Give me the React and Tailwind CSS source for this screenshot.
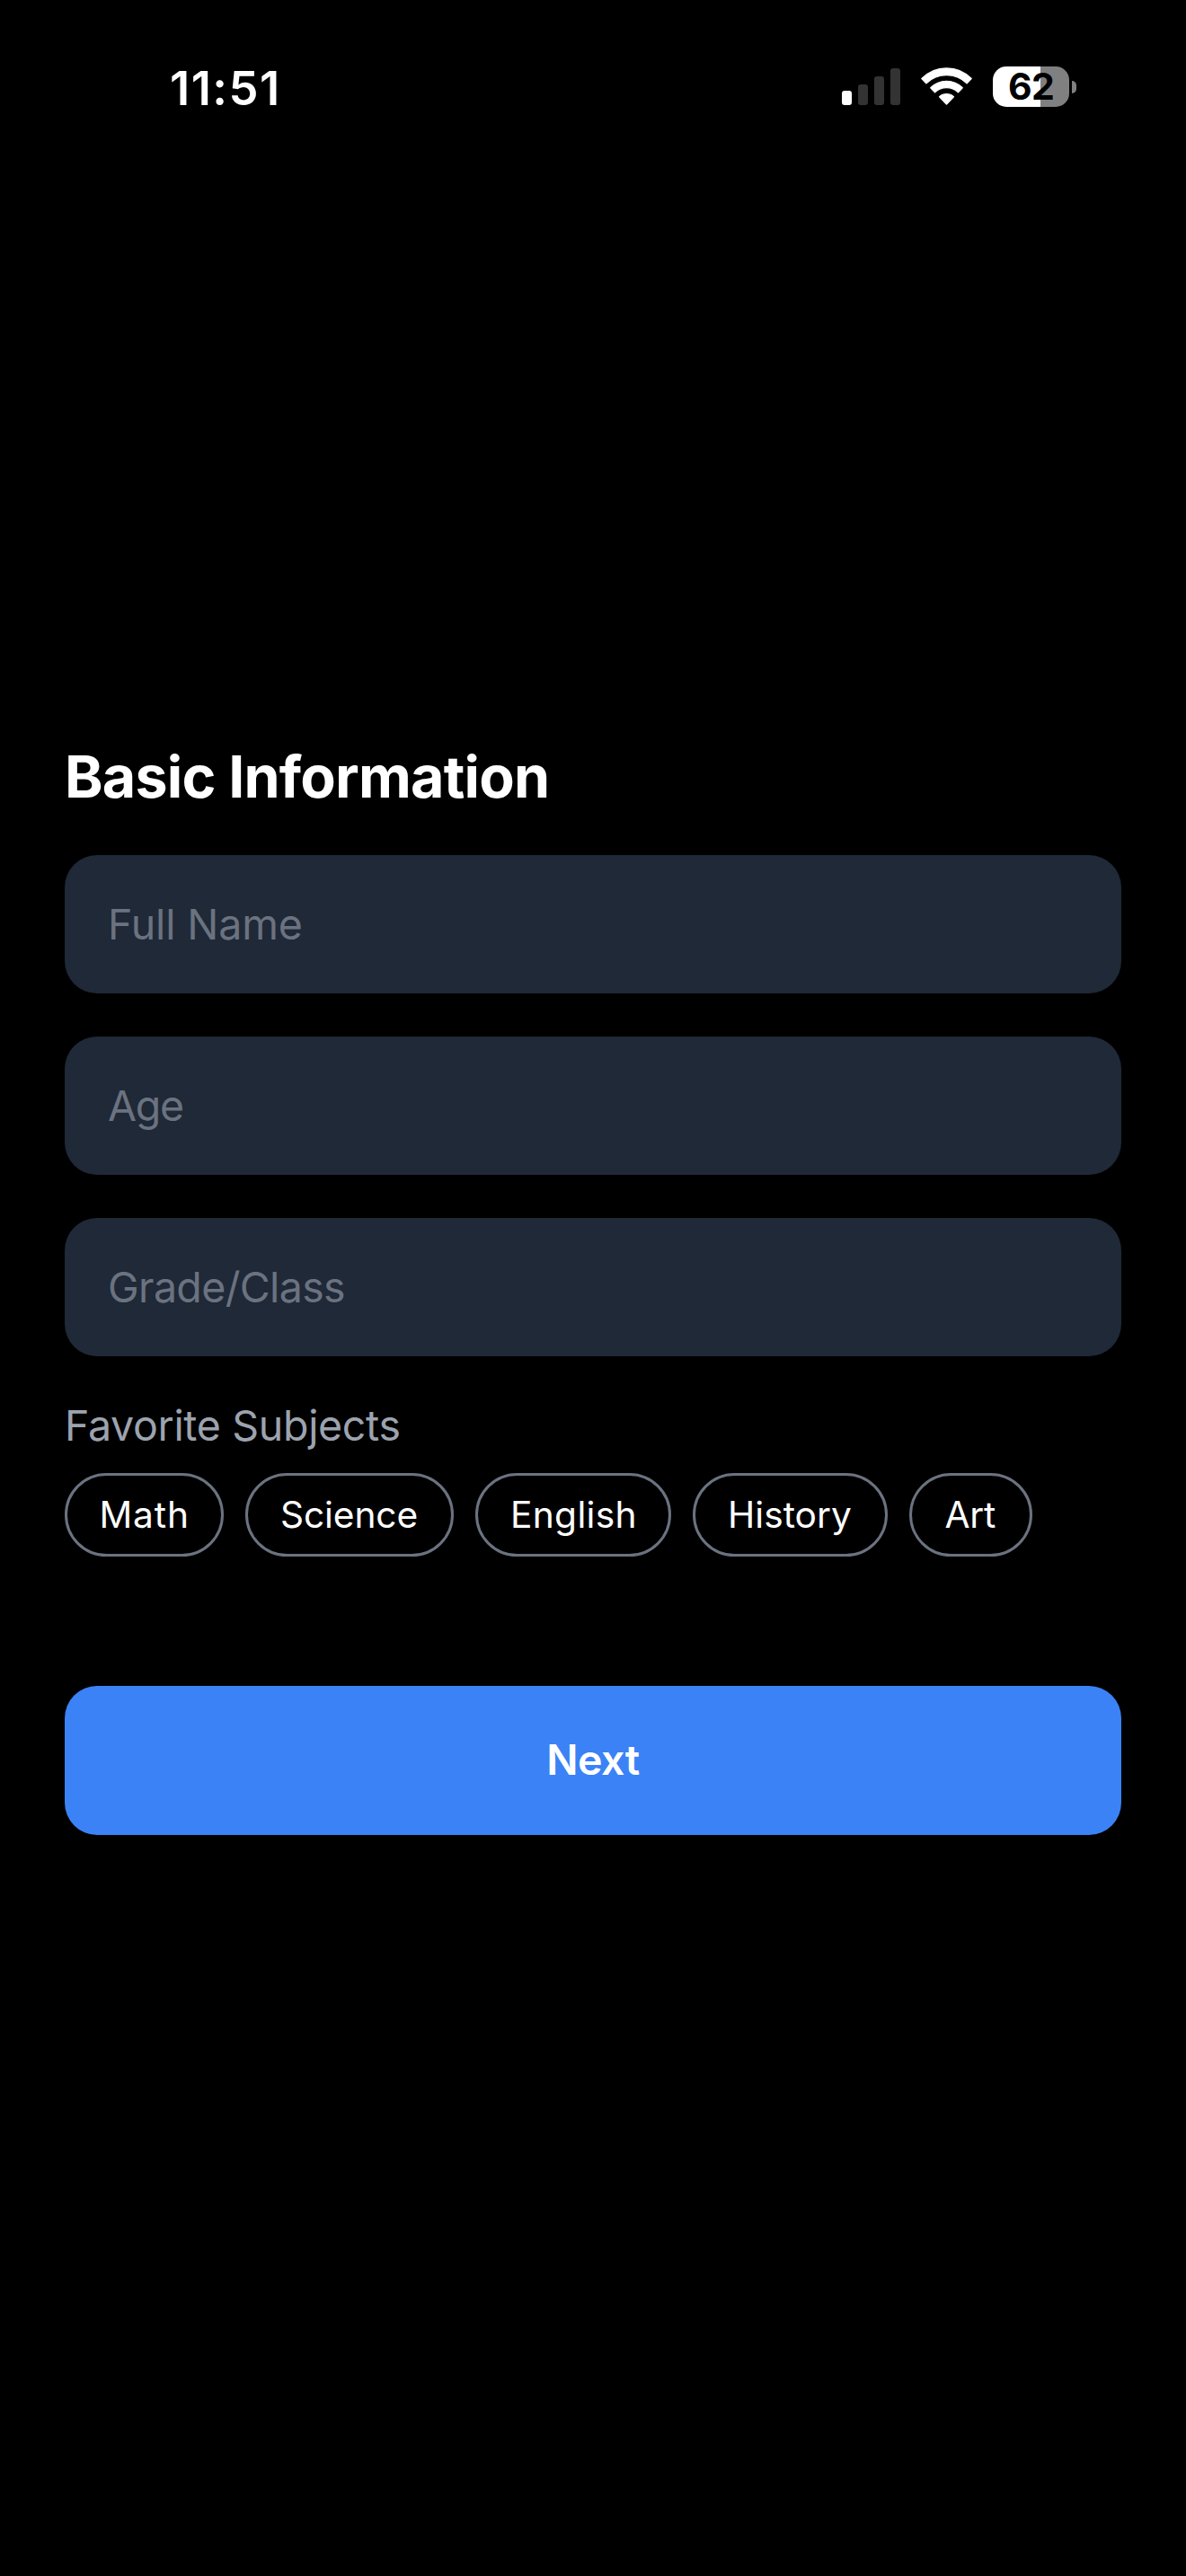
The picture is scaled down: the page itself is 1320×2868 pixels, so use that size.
const fields = ["Full Name", "Age", "Grade/Class"];
const fieldTracking = ["tracking-[-0.13px]", "tracking-[-1.3px]", "tracking-[-0.65px]"];

const subjects = [
  { label: "Math", style: "w-[177px] pl-[35.5px] tracking-[0.86px]" },
  { label: "Science", style: "w-[232px] pl-[36px] tracking-[-0.12px]" },
  { label: "English", style: "w-[218px] pl-[36px] tracking-[0.31px]" },
  { label: "History", style: "w-[217px] pl-[36px] tracking-[0.03px]" },
  { label: "Art", style: "w-[137px] pl-[36.5px] tracking-[-0.26px]" },
];

function SignalBars() {
  return (
    <div className="flex h-[43px] items-end gap-[7px] pb-[1px]">
      <span className="h-[16px] w-[11px] rounded-[3px] bg-white" />
      <span className="h-[23px] w-[11px] rounded-[3px] bg-[#333333]" />
      <span className="h-[32px] w-[11px] rounded-[3px] bg-[#333333]" />
      <span className="h-[41px] w-[11px] rounded-[3px] bg-[#333333]" />
    </div>
  );
}

function WifiIcon() {
  return (
    <svg
      width="57"
      height="43"
      viewBox="0 0 57 43"
      fill="white"
      stroke="white"
      strokeWidth="1.4"
      strokeLinejoin="round"
    >
      <path d="M0.9 12.6 A38.5 38.5 0 0 1 56.1 12.6 L51.1 17.8 A32.5 32.5 0 0 0 5.9 17.8 Z" />
      <path d="M10.8 22.7 A25 25 0 0 1 46.2 22.7 L41.4 27.7 A18.8 18.8 0 0 0 15.6 27.7 Z" />
      <path d="M20.6 32.8 A11.5 11.5 0 0 1 36.4 32.8 L28.5 41.1 Z" />
    </svg>
  );
}

function Battery() {
  return (
    <div className="flex items-center gap-[3px]">
      <div className="flex h-[45px] w-[85px] items-center justify-center rounded-[15px] bg-[linear-gradient(90deg,#ffffff_53px,#808080_53px)]">
        <span className="text-[41px] leading-[45px] font-bold tracking-[-0.63px] text-black">62</span>
      </div>
      <span className="h-[14px] w-[5px] rounded-r-full bg-[#808080]" />
    </div>
  );
}

export default function App() {
  return (
    <div className="flex h-[2868px] w-[1320px] flex-col bg-black font-['Inter','Liberation_Sans',sans-serif] text-white">
      <header className="flex h-[193px] items-start justify-between pr-[122px] pl-[189px]">
        <time className="mt-[66px] text-[52.5px] leading-[64px] font-semibold tracking-[1.46px]">11:51</time>
        <div className="mt-[74px] flex h-[45px] items-center">
          <SignalBars />
          <div className="ml-[23px]">
            <WifiIcon />
          </div>
          <div className="ml-[23px]">
            <Battery />
          </div>
        </div>
      </header>

      <main className="px-[72px] pt-[630px]">
        <h1 className="h-[129px] text-[64.5px] leading-[84px] font-bold tracking-[-0.8px]">Basic Information</h1>

        <form className="flex flex-col gap-[48px]">
          {fields.map((name, i) => (
            <input
              key={name}
              aria-label={name}
              placeholder={name}
              className={`h-[154px] w-full rounded-[36px] bg-[#1f2937] px-[48px] text-[46.5px] outline-none placeholder:text-[#6b7280] ${fieldTracking[i]}`}
            />
          ))}
        </form>

        <p className="mt-[41px] text-[46.5px] leading-[72px] tracking-[-0.33px] text-[#9ca3af]">Favorite Subjects</p>
        <div className="mt-[17px] flex gap-[24px]">
          {subjects.map(({ label, style }) => (
            <button
              key={label}
              type="button"
              className={`flex h-[93px] items-center rounded-full border-[3px] border-[#6b7280] text-[40.7px] leading-[60px] ${style}`}
            >
              {label}
            </button>
          ))}
        </div>

        <button
          type="button"
          className="mt-[144px] flex h-[166px] w-full items-center justify-center rounded-[36px] bg-[#3b82f6] text-[46.5px] font-semibold tracking-[-0.51px]"
        >
          Next
        </button>
      </main>
    </div>
  );
}
